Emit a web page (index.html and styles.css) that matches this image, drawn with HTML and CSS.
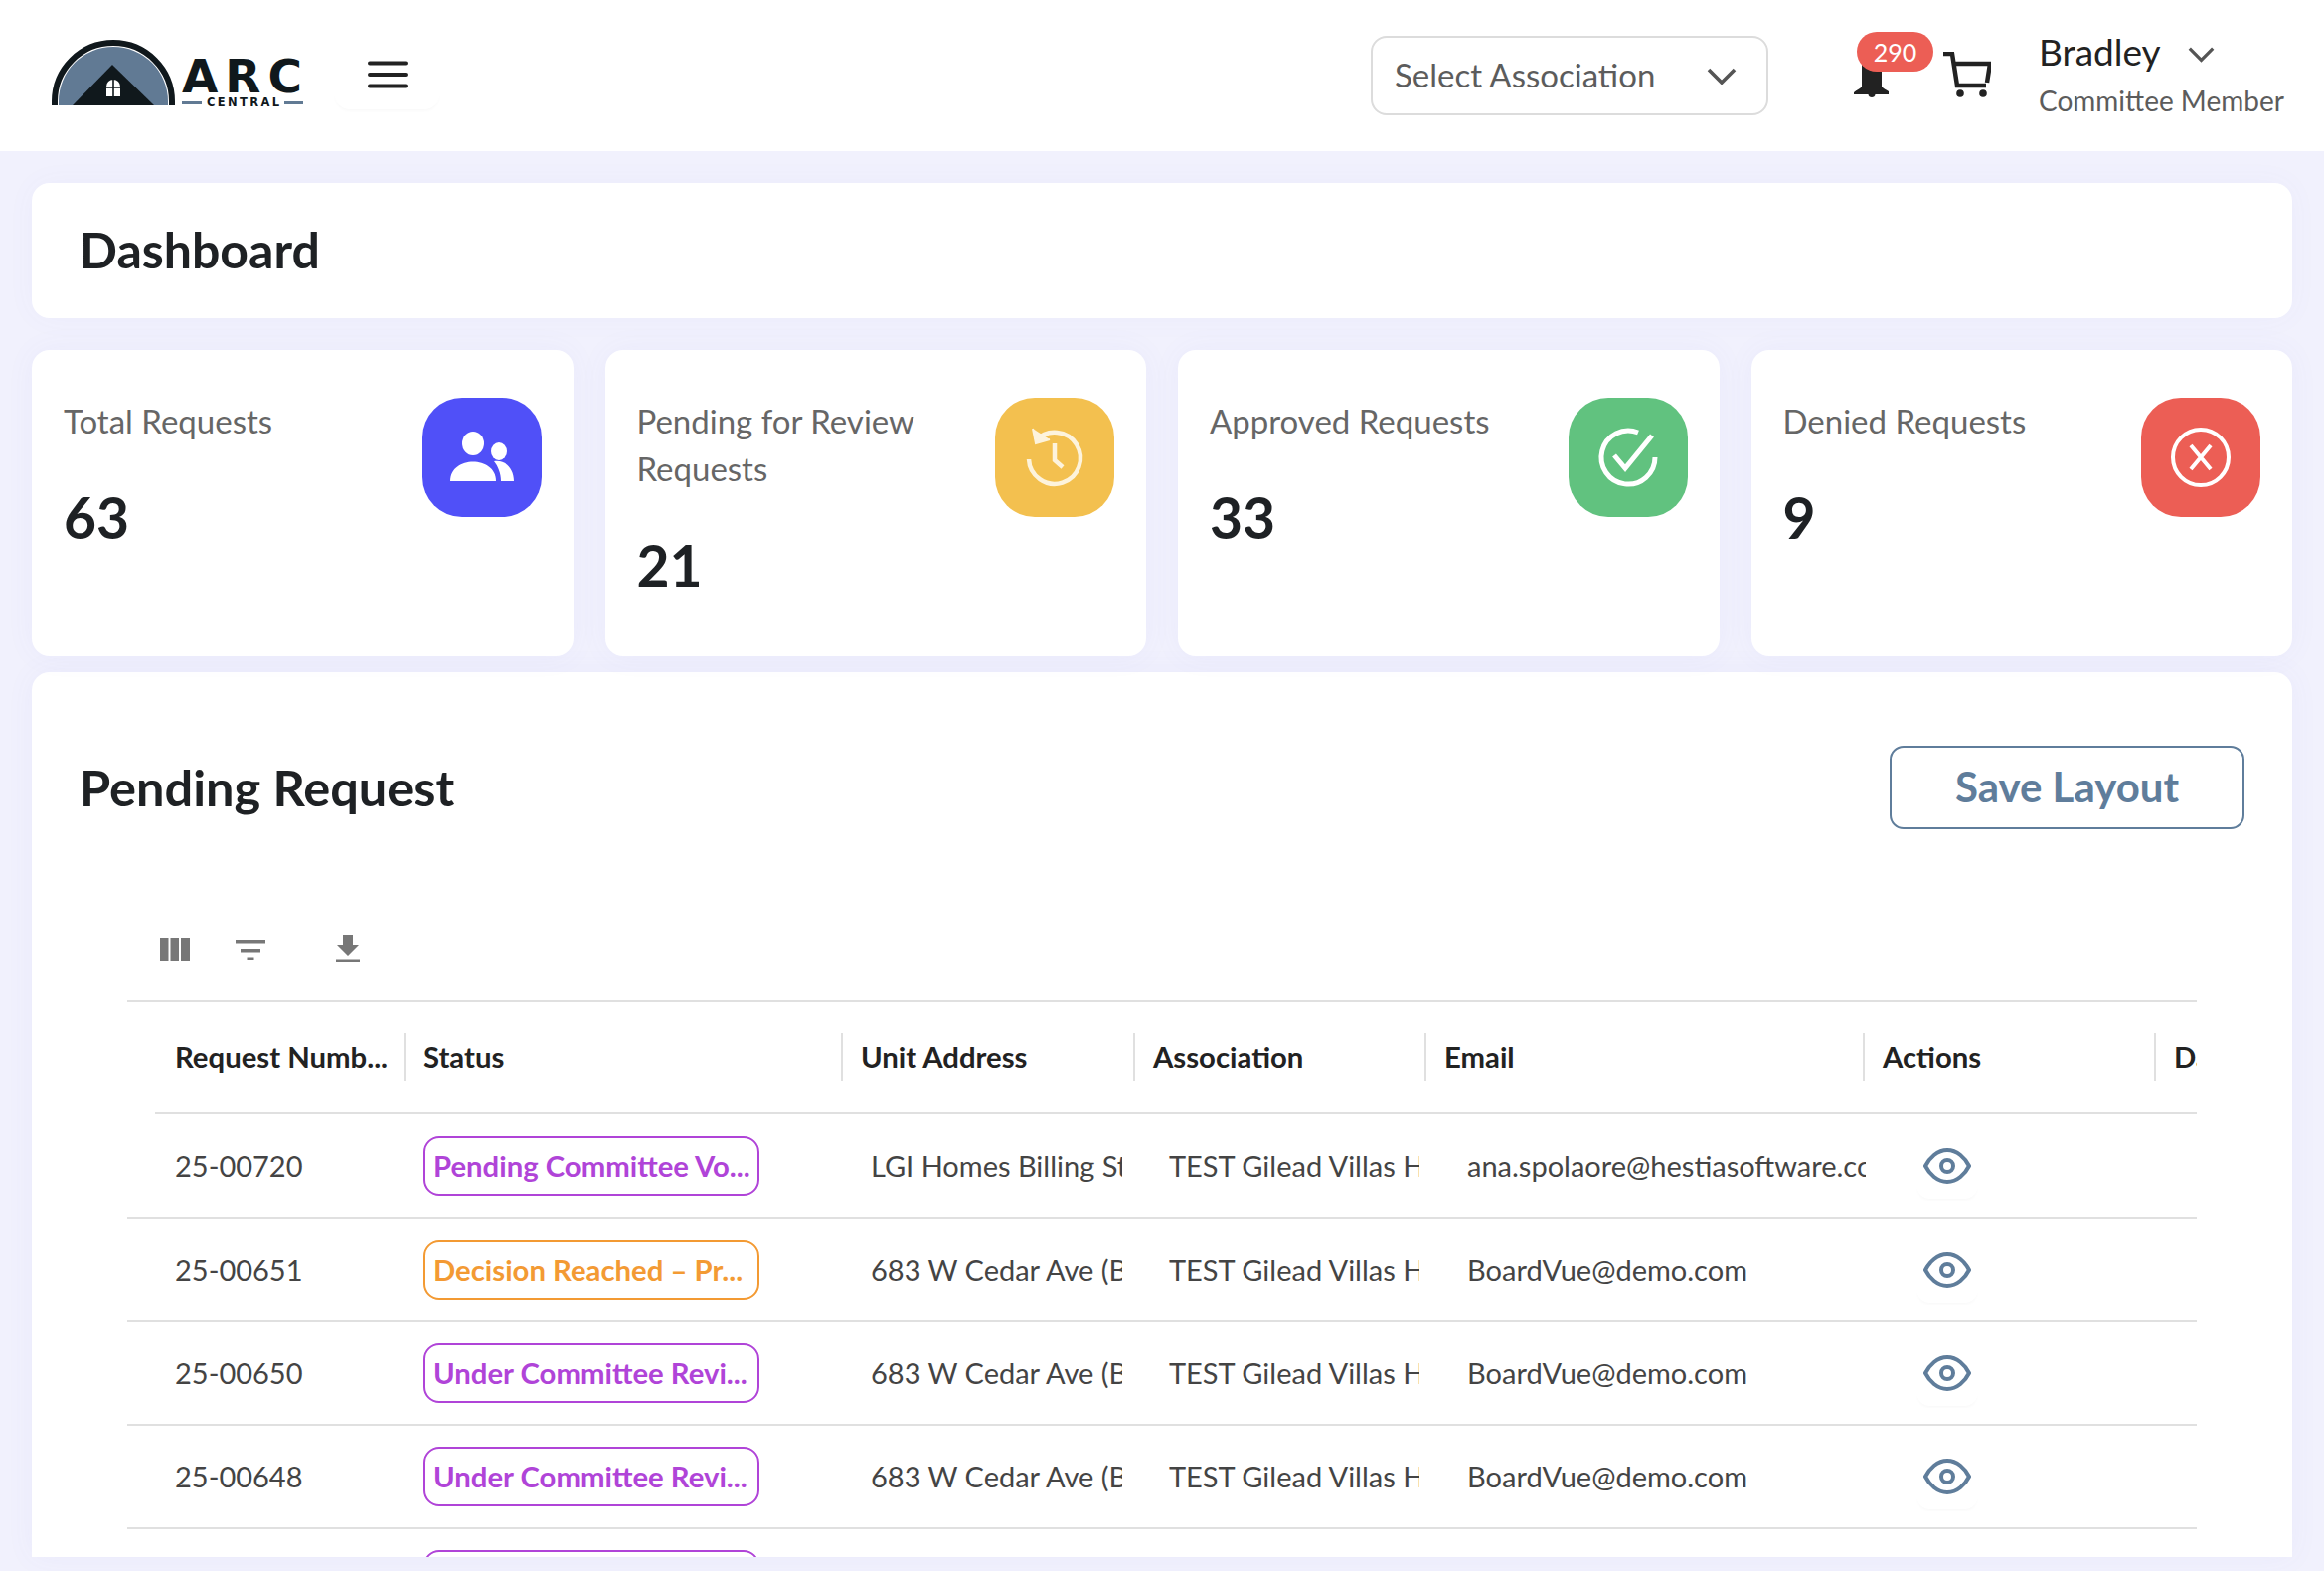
FILE: index.html
```html
<!DOCTYPE html>
<html lang="en">
<head>
<meta charset="utf-8">
<title>ARC Central Dashboard</title>
<link rel="stylesheet" href="styles.css">
</head>
<body>
<header class="topbar">
  <svg class="logo" viewBox="0 0 253 68" aria-label="ARC Central">
    <path d="M3 66V62A59 59 0 0 1 121 62V66" fill="none" stroke="#10181c" stroke-width="6"/>
    <path d="M7 66V62A55 55 0 0 1 117 62V66Z" fill="#617a94"/>
    <path d="M21 66L61 25L103 66Z" fill="#10181c"/>
    <path d="M55 57V47A7 7 0 0 1 69 47V57Z" fill="#fff"/>
    <path d="M62 39V57M55 48H69" stroke="#10181c" stroke-width="1.600"/>
    <text x="131" y="52.500" class="logo-arc" textLength="121">ARC</text>
    <rect x="131" y="62" width="20" height="3" fill="#617a94"/>
    <text x="156" y="67" class="logo-central" textLength="73">CENTRAL</text>
    <rect x="234" y="62" width="19" height="3" fill="#617a94"/>
  </svg>
  <button class="menu-btn" type="button" aria-label="Menu">
    <svg class="menu-icon" viewBox="0 0 40 28"><path d="M2 2.500H38M2 14H38M2 25.500H38" stroke="#222" stroke-width="4" stroke-linecap="round"/></svg>
  </button>
  <div class="select-box">
    <span class="select-text">Select Association</span>
    <svg class="chev" viewBox="0 0 30 17"><path d="M2 2L15 15L28 2" fill="none" stroke="#555" stroke-width="3.600"/></svg>
  </div>
  <div class="bell">
    <svg class="bell-icon" viewBox="0 0 35 36"><path d="M8 25V0H28V25C30 28 33 28 36 31V33H0V31C3 28 6 28 8 25Z" fill="#222"/><path d="M14.500 33H21.500C21.500 37 14.500 37 14.500 33Z" fill="#222"/></svg>
    <span class="bell-badge">290</span>
  </div>
  <svg class="cart" viewBox="0 0 49 46"><path d="M1 2H10L15 34H44M12 12H48L45 31" fill="none" stroke="#222" stroke-width="4.500"/><circle cx="18" cy="42" r="3.800" fill="#222"/><circle cx="41" cy="42" r="3.800" fill="#222"/></svg>
  <div class="user">
    <div class="user-name"><span>Bradley</span><svg class="chev chev-user" viewBox="0 0 30 17"><path d="M2 2L15 15L28 2" fill="none" stroke="#555" stroke-width="3.600"/></svg></div>
    <div class="user-role">Committee Member</div>
  </div>
</header>

<main class="content">
  <section class="title-card"><h1>Dashboard</h1></section>

  <section class="stats">
    <article class="stat">
      <div><div class="stat-label">Total Requests</div><div class="stat-value">63</div></div>
      <div class="tile tile-blue">
        <svg viewBox="0 0 120 120"><ellipse cx="51" cy="46" rx="11" ry="12" fill="#fff"/><path d="M28 84C28 58 74 58 74 84Z" fill="#fff"/><ellipse cx="77" cy="54" rx="8" ry="9" fill="#fff"/><path d="M72 64C84 62 92 72 92 84H79C79 76 76 69 72 64Z" fill="#fff"/></svg>
      </div>
    </article>
    <article class="stat">
      <div><div class="stat-label">Pending for Review Requests</div><div class="stat-value">21</div></div>
      <div class="tile tile-yellow">
        <svg viewBox="0 0 120 120" fill="none" stroke="#fdf3dc" stroke-width="4.500"><path d="M41 43A26 26 0 1 1 34 62"/><path d="M38 31L41 46L55 42" fill="#fdf3dc" stroke-width="2"/><path d="M60 46V63L68 70"/></svg>
      </div>
    </article>
    <article class="stat">
      <div><div class="stat-label">Approved Requests</div><div class="stat-value">33</div></div>
      <div class="tile tile-green">
        <svg viewBox="0 0 120 120" fill="none" stroke="#fff" stroke-width="5"><path d="M87 60A27 27 0 1 1 70 35"/><path d="M46 58L57 71L84 38"/></svg>
      </div>
    </article>
    <article class="stat">
      <div><div class="stat-label">Denied Requests</div><div class="stat-value">9</div></div>
      <div class="tile tile-red">
        <svg viewBox="0 0 120 120" fill="none" stroke="#fff" stroke-width="4"><circle cx="60" cy="60" r="28"/><path d="M50 48L70 72M70 48L50 72"/></svg>
      </div>
    </article>
  </section>

  <section class="panel">
    <div class="panel-head">
      <h2>Pending Request</h2>
      <button class="save-btn" type="button">Save Layout</button>
    </div>
    <div class="toolbar">
      <svg class="tool tool-cols" viewBox="0 0 30 24"><path d="M0 0H8.500V24H0ZM10.500 0H19V24H10.500ZM21 0H30V24H21Z" fill="#777"/></svg>
      <svg class="tool tool-filter" viewBox="0 0 30 21"><path d="M0 0H30V3.500H0ZM5 9H25V12.500H5ZM11.500 17.500H18.500V21H11.500Z" fill="#777"/></svg>
      <svg class="tool tool-down" viewBox="0 0 24 28"><path d="M7 0H17V10H23L12 21L1 10H7ZM0 24.500H24V28H0Z" fill="#777"/></svg>
    </div>
    <div class="table">
      <div class="thead">
        <div class="th th-first">Request Numb...</div>
        <div class="th">Status</div>
        <div class="th">Unit Address</div>
        <div class="th">Association</div>
        <div class="th">Email</div>
        <div class="th">Actions</div>
        <div class="th">Date</div>
      </div>

      <div class="row row-first">
        <div class="cell cell-id">25-00720</div>
        <div class="cell"><span class="badge badge-purple">Pending Committee Vo...</span></div>
        <div class="cell cell-unit">LGI Homes Billing Street</div>
        <div class="cell cell-assoc">TEST Gilead Villas HOA</div>
        <div class="cell cell-email">ana.spolaore@hestiasoftware.com</div>
        <div class="cell cell-action"><span class="eye-btn"><svg class="eye" viewBox="0 0 48 36"><path d="M2 18C6 10 14 2 24 2S42 10 46 18C42 26 34 34 24 34S6 26 2 18Z" fill="none" stroke="#5f7d9b" stroke-width="4"/><circle cx="24" cy="18" r="6" fill="none" stroke="#5f7d9b" stroke-width="4"/></svg></span></div>
      </div>
      <div class="row">
        <div class="cell cell-id">25-00651</div>
        <div class="cell"><span class="badge badge-orange">Decision Reached – Pr...</span></div>
        <div class="cell cell-unit">683 W Cedar Ave (Bldg 2)</div>
        <div class="cell cell-assoc">TEST Gilead Villas HOA</div>
        <div class="cell cell-email">BoardVue@demo.com</div>
        <div class="cell cell-action"><span class="eye-btn"><svg class="eye" viewBox="0 0 48 36"><path d="M2 18C6 10 14 2 24 2S42 10 46 18C42 26 34 34 24 34S6 26 2 18Z" fill="none" stroke="#5f7d9b" stroke-width="4"/><circle cx="24" cy="18" r="6" fill="none" stroke="#5f7d9b" stroke-width="4"/></svg></span></div>
      </div>
      <div class="row">
        <div class="cell cell-id">25-00650</div>
        <div class="cell"><span class="badge badge-purple">Under Committee Revi...</span></div>
        <div class="cell cell-unit">683 W Cedar Ave (Bldg 2)</div>
        <div class="cell cell-assoc">TEST Gilead Villas HOA</div>
        <div class="cell cell-email">BoardVue@demo.com</div>
        <div class="cell cell-action"><span class="eye-btn"><svg class="eye" viewBox="0 0 48 36"><path d="M2 18C6 10 14 2 24 2S42 10 46 18C42 26 34 34 24 34S6 26 2 18Z" fill="none" stroke="#5f7d9b" stroke-width="4"/><circle cx="24" cy="18" r="6" fill="none" stroke="#5f7d9b" stroke-width="4"/></svg></span></div>
      </div>
      <div class="row">
        <div class="cell cell-id">25-00648</div>
        <div class="cell"><span class="badge badge-purple">Under Committee Revi...</span></div>
        <div class="cell cell-unit">683 W Cedar Ave (Bldg 2)</div>
        <div class="cell cell-assoc">TEST Gilead Villas HOA</div>
        <div class="cell cell-email">BoardVue@demo.com</div>
        <div class="cell cell-action"><span class="eye-btn"><svg class="eye" viewBox="0 0 48 36"><path d="M2 18C6 10 14 2 24 2S42 10 46 18C42 26 34 34 24 34S6 26 2 18Z" fill="none" stroke="#5f7d9b" stroke-width="4"/><circle cx="24" cy="18" r="6" fill="none" stroke="#5f7d9b" stroke-width="4"/></svg></span></div>
      </div>
      <div class="row">
        <div class="cell cell-id"></div>
        <div class="cell"><span class="badge badge-purple"></span></div>
      </div>
    </div>
  </section>
</main>
</body>
</html>
```

FILE: styles.css
```css
* { box-sizing: border-box; }

html, body {
  margin: 0;
  height: 1580px;
  overflow: hidden;
}

body {
  background: #f1f1fd;
  font-family: "Lato", "Noto Sans", sans-serif;
  color: #222;
}

h1, h2 { margin: 0; font-weight: 700; color: #1e2124; }

.topbar {
  height: 152px;
  background: #fff;
  display: flex;
  align-items: flex-start;
  padding-left: 52px;
}

.logo { width: 253px; height: 68px; margin-top: 40px; flex: none; }
.logo-arc { font: 700 47px "DejaVu Sans", sans-serif; fill: #10181c; }
.logo-central { font: 700 11.500px "DejaVu Sans", sans-serif; fill: #10181c; }

.menu-btn {
  width: 107px;
  height: 70px;
  margin: 40px 0 0 31px;
  border: 0;
  padding: 0;
  background: #fff;
  border-radius: 16px;
  box-shadow: 0 3px 3px -1px rgba(0, 0, 0, .025);
  display: flex;
  align-items: center;
  justify-content: center;
}
.menu-icon { width: 40px; height: 28px; }

.select-box {
  margin: 36px 0 0 auto;
  width: 400px;
  height: 80px;
  border: 2px solid #dcdcdc;
  border-radius: 16px;
  padding: 0 30px 0 22px;
  display: flex;
  align-items: center;
  justify-content: space-between;
  font-size: 33px;
  color: #5c5c5c;
}
.select-text { margin-bottom: 3px; }
.chev { width: 30px; height: 17px; flex: none; }

.bell { position: relative; width: 35px; height: 36px; margin: 62px 0 0 86px; flex: none; }
.bell-icon { width: 35px; height: 36px; display: block; }
.bell-badge {
  position: absolute;
  left: 3px;
  top: -30px;
  width: 77px;
  height: 40px;
  border-radius: 20px;
  background: #ec5e55;
  color: #fff;
  font-size: 25px;
  line-height: 40px;
  text-align: center;
}

.cart { width: 49px; height: 46px; margin: 52px 0 0 54px; flex: none; }

.user { width: 287px; margin: 28px 0 0 48px; flex: none; }
.user-name { display: flex; align-items: center; font-size: 37px; line-height: 48px; color: #222; }
.chev-user { width: 27px; margin: 4px 0 0 27px; }
.user-role { margin-top: 1px; font-size: 28px; line-height: 48px; color: #5c5c5c; }

.content {
  height: 1428px;
  padding: 32px 32px 0;
  background: #f1f1fd;
}

.title-card {
  height: 136px;
  background: #fff;
  border-radius: 18px;
  padding: 0 0 3px 48px;
  display: flex;
  align-items: center;
  box-shadow: 0 0 30px rgba(90, 90, 210, .04);
}
.title-card h1 { font-size: 50px; }

.stats {
  margin-top: 32px;
  display: grid;
  grid-template-columns: repeat(4, 1fr);
  gap: 32px;
}
.stat {
  height: 308px;
  background: #fff;
  border-radius: 18px;
  padding: 48px 32px;
  display: flex;
  justify-content: space-between;
  gap: 40px;
  box-shadow: 0 0 30px rgba(90, 90, 210, .05);
}
.stat-label { margin-top: -1px; font-size: 33px; line-height: 48px; color: #666; }
.stat-value { margin-top: 41px; font-size: 57px; font-weight: 700; line-height: 64px; color: #1e2124; }

.tile { width: 120px; height: 120px; border-radius: 40px; flex: none; }
.tile svg { display: block; width: 120px; height: 120px; }
.tile-blue { background: #5050f8; }
.tile-yellow { background: #f3c04f; }
.tile-green { background: #61c27f; }
.tile-red { background: #ec5e55; }

.panel {
  margin-top: 16px;
  height: 890px;
  background: #fff;
  border-radius: 18px 18px 0 0;
  overflow: hidden;
  box-shadow: 0 0 30px rgba(90, 90, 210, .05);
}
.panel-head {
  height: 158px;
  padding: 74px 48px 0;
  display: flex;
  justify-content: space-between;
}
.panel-head h2 { font-size: 50.500px; line-height: 83px; }
.save-btn {
  width: 357px;
  height: 84px;
  padding: 0 0 3px;
  background: #fff;
  border: 2px solid #5f7d9b;
  border-radius: 14px;
  font: 700 42px "Lato", "Noto Sans", sans-serif;
  color: #5f7d9b;
}

.toolbar {
  height: 172px;
  margin-left: 129px;
  padding-top: 106px;
  display: flex;
  align-items: flex-start;
}
.tool { flex: none; }
.tool-cols { width: 30px; height: 24px; margin-top: 3px; }
.tool-filter { width: 30px; height: 21px; margin: 5px 0 0 46px; }
.tool-down { width: 24px; height: 28px; margin-left: 71px; }

.table {
  margin: 0 96px;
  overflow: hidden;
  border-top: 2px solid #e0e0e0;
}

.thead {
  height: 112px;
  margin-left: 28px;
  border-bottom: 2px solid #e0e0e0;
  display: grid;
  grid-template-columns: 250px 440px 294px 293px 441px 293px 293px;
  align-items: center;
}
.th {
  height: 48px;
  padding-left: 18px;
  border-left: 2px solid #e0e0e0;
  font-size: 29.300px;
  font-weight: 700;
  line-height: 48px;
  color: #222;
  white-space: nowrap;
  overflow: hidden;
}
.th-first { border-left: 0; padding-left: 20px; }

.row {
  height: 104px;
  border-bottom: 2px solid #e0e0e0;
  display: grid;
  grid-template-columns: 298px 420px 294px 293px 444px 290px;
  align-items: center;
}
.row-first { height: 106px; padding-top: 2px; }
.cell {
  font-size: 29px;
  line-height: 40px;
  color: #444;
  white-space: nowrap;
  overflow: hidden;
}
.cell-id { padding-left: 48px; }
.cell-unit { padding-left: 30px; margin-right: 11px; }
.cell-assoc { padding-left: 36px; margin-right: 5px; }
.cell-email { padding-left: 43px; }
.cell-action { padding-left: 51px; height: 70px; }

.badge {
  display: block;
  width: 338px;
  height: 60px;
  padding-left: 8px;
  border: 2px solid;
  border-radius: 16px;
  font-size: 29.300px;
  font-weight: 700;
  line-height: 56px;
  white-space: nowrap;
  overflow: hidden;
}
.badge-purple { color: #b044d8; }
.badge-orange { color: #f39a33; }

.eye-btn {
  display: flex;
  justify-content: center;
  width: 62px;
  height: 68px;
  padding-top: 17px;
  border-radius: 14px;
  box-shadow: 0 3px 3px -1px rgba(0, 0, 0, .025);
}
.eye { width: 48px; height: 36px; }
```
